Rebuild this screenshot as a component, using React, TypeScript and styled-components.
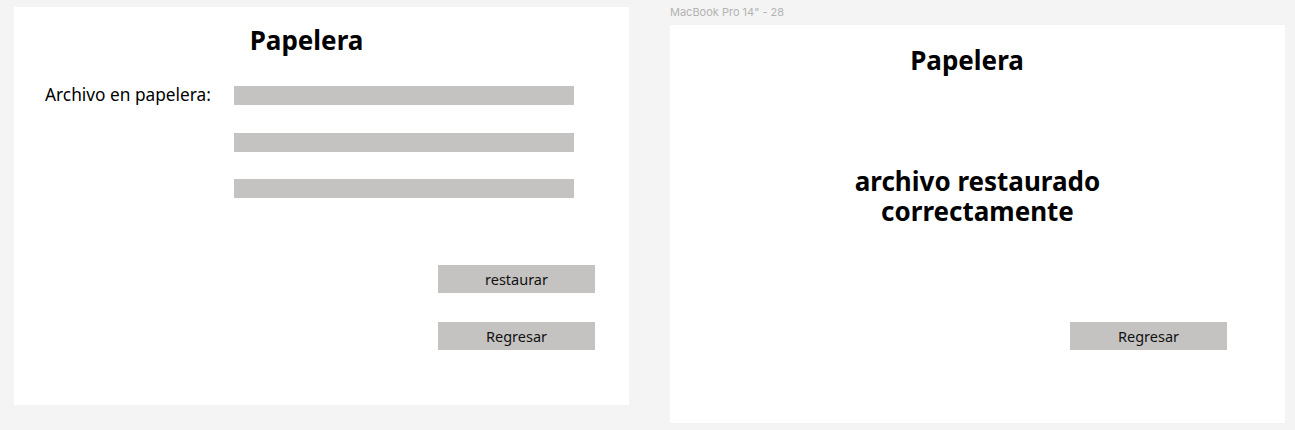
import * as React from "react";
import styled, { createGlobalStyle } from "styled-components";

const GlobalStyle = createGlobalStyle`
  html, body {
    margin: 0;
    padding: 0;
    background: #f4f4f4;
  }
  body {
    font-family: "Noto Sans", "Open Sans", sans-serif;
    color: #000;
  }
`;

const Canvas = styled.div`
  display: flex;
  align-items: flex-start;
  gap: 41px;
  width: 1295px;
  height: 430px;
  padding-left: 14px;
  box-sizing: border-box;
  overflow: hidden;
`;

const ArtboardColumn = styled.div<{ $top?: number }>`
  display: flex;
  flex-direction: column;
  margin-top: ${p => p.$top ?? 0}px;
`;

const ArtboardName = styled.div`
  height: 25px;
  line-height: 24px;
  font-family: Inter, "Liberation Sans", sans-serif;
  font-size: 11px;
  color: #b3b3b3;
`;

const Frame = styled.section<{ $pad: number }>`
  display: flex;
  flex-direction: column;
  width: 615px;
  height: 398px;
  padding-top: ${p => p.$pad}px;
  box-sizing: border-box;
  background: #ffffff;
`;

const Title = styled.h1<{ $nudge: number }>`
  margin: 0;
  padding-right: ${p => p.$nudge}px;
  font-size: 26px;
  font-weight: 700;
  line-height: 36px;
  text-align: center;
`;

const FileRow = styled.div`
  display: flex;
  align-items: flex-start;
  margin-top: 28px;
  padding-left: 31px;
`;

const FileLabel = styled.span`
  width: 189px;
  margin-top: -1px;
  font-size: 17.3px;
  line-height: 19px;
`;

const SlotStack = styled.div`
  display: flex;
  flex-direction: column;
  gap: 27.5px;
`;

const Slot = styled.div`
  width: 340px;
  height: 19px;
  background: #c4c3c1;
`;

const Actions = styled.div<{ $top: number; $right: number }>`
  display: flex;
  flex-direction: column;
  align-items: flex-end;
  gap: 29.5px;
  margin-top: ${p => p.$top}px;
  padding-right: ${p => p.$right}px;
`;

const Button = styled.button`
  width: 157px;
  height: 27.5px;
  padding: 0;
  border: none;
  background: #c4c3c1;
  font-family: "Noto Sans", "Open Sans", sans-serif;
  font-size: 14.5px;
  color: #111;
  cursor: pointer;
`;

const Message = styled.p`
  margin: 88px 0 0;
  font-size: 26px;
  font-weight: 700;
  line-height: 30px;
  text-align: center;
`;

export default function App() {
  return (
    <>
      <GlobalStyle />
      <Canvas>
        <ArtboardColumn $top={7}>
          <Frame $pad={15}>
            <Title $nudge={30}>Papelera</Title>
            <FileRow>
              <FileLabel>Archivo en papelera:</FileLabel>
              <SlotStack>
                <Slot />
                <Slot />
                <Slot />
              </SlotStack>
            </FileRow>
            <Actions $top={67} $right={34}>
              <Button>restaurar</Button>
              <Button>Regresar</Button>
            </Actions>
          </Frame>
        </ArtboardColumn>

        <ArtboardColumn>
          <ArtboardName>MacBook Pro 14" - 28</ArtboardName>
          <Frame $pad={17}>
            <Title $nudge={21}>Papelera</Title>
            <Message>
              archivo restaurado
              <br />
              correctamente
            </Message>
            <Actions $top={96} $right={58}>
              <Button>Regresar</Button>
            </Actions>
          </Frame>
        </ArtboardColumn>
      </Canvas>
    </>
  );
}
